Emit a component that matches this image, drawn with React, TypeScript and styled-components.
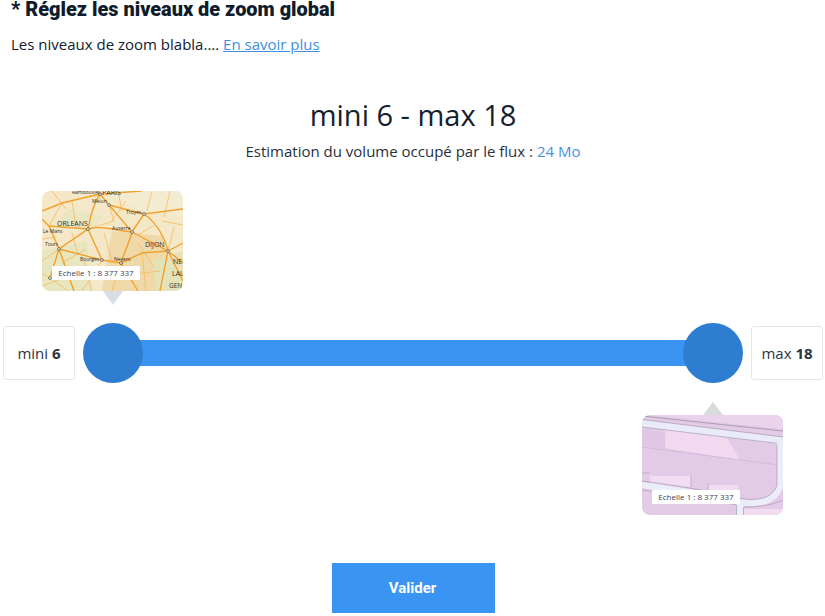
import * as React from "react";
import styled, { createGlobalStyle } from "styled-components";

const GlobalStyle = createGlobalStyle`
  html, body {
    margin: 0;
    padding: 0;
    background: #fff;
  }
  body {
    font-family: "Open Sans", "Noto Sans", sans-serif;
    color: #14202e;
  }
`;

const Page = styled.div`
  width: 825px;
  height: 616px;
  overflow: hidden;
`;

const Header = styled.div`
  padding-left: 11px;
`;

const Title = styled.h2`
  margin: 0;
  font-family: Roboto, sans-serif;
  font-size: 19.9px;
  font-weight: 900;
  line-height: 20px;
  color: #0f1c2b;
`;

const Intro = styled.p`
  margin: 14px 0 0;
  font-size: 15px;
  line-height: 20px;
`;

const Link = styled.a`
  color: #3d8fde;
  text-decoration: underline;
`;

const Summary = styled.div`
  margin-top: 42px;
  padding-left: 1px;
  text-align: center;
`;

const Range = styled.div`
  font-size: 29px;
  line-height: 38px;
  color: #14202e;
`;

const Estimate = styled.div`
  margin-top: 7px;
  font-size: 15px;
  line-height: 20px;
  color: #27313d;
`;

const Accent = styled.span`
  color: #4a90e2;
`;

const PreviewRow = styled.div<{ $left: number; $top: number }>`
  display: flex;
  margin-top: ${p => p.$top}px;
  padding-left: ${p => p.$left}px;
`;

const Preview = styled.div<{ $flip?: boolean }>`
  display: flex;
  flex-direction: ${p => (p.$flip ? "column-reverse" : "column")};
  align-items: center;
  width: 141px;
`;

const Arrow = styled.div<{ $flip?: boolean }>`
  width: 0;
  height: 0;
  border-left: 10px solid transparent;
  border-right: 10px solid transparent;
  ${p =>
    p.$flip
      ? "border-bottom: 13px solid #dadbdf;"
      : "border-top: 14px solid #d9dde7;"}
`;

const MapCard = styled.div`
  position: relative;
  width: 141px;
  height: 100px;
  border-radius: 8px;
  overflow: hidden;
  svg {
    display: block;
  }
`;

const Scale = styled.div`
  position: absolute;
  left: 10px;
  top: 75px;
  width: 88px;
  height: 14px;
  background: #fff;
  font-size: 8px;
  line-height: 14px;
  text-align: center;
  color: #3a4450;
`;

const SliderRow = styled.div`
  display: flex;
  align-items: center;
  height: 60px;
  margin-top: 18px;
  padding-left: 3px;
`;

const Bound = styled.div`
  box-sizing: border-box;
  flex: none;
  width: 72px;
  height: 54px;
  border: 1px solid #e4e6ea;
  border-radius: 3px;
  font-size: 15px;
  line-height: 52px;
  text-align: center;
  color: #2c3440;
  b {
    font-weight: 700;
  }
`;

const Rail = styled.div`
  display: flex;
  align-items: center;
  flex: none;
  width: 660px;
  margin: 0 8px;
`;

const Thumb = styled.div`
  position: relative;
  flex: none;
  width: 60px;
  height: 60px;
  border-radius: 50%;
  background: #2f7dd0;
`;

const Track = styled.div`
  flex: 1;
  height: 26px;
  margin: 0 -30px;
  background: #3a94f2;
`;

const Footer = styled.div`
  display: flex;
  justify-content: center;
  margin-top: 48px;
  padding-left: 2px;
`;

const Submit = styled.button`
  width: 163px;
  height: 50px;
  border: 0;
  padding: 0 2px 0 0;
  background: #3a94f2;
  color: #fff;
  font-family: Roboto, sans-serif;
  font-size: 15px;
  font-weight: 700;
`;

const mainRoads = [
  "M58 3 L67 14 L90 41 L126 60 L141 72",
  "M58 3 C50 15 48 28 46 38 L17 58 L8 87",
  "M46 38 L60 69 L79 72 L96 100",
  "M46 38 C60 34 76 40 90 41 C86 55 82 62 79 72",
  "M67 14 L102 23 L141 18",
  "M102 23 L90 41",
  "M102 23 C115 32 122 45 126 60 L118 100",
  "M7 35 L46 38 M7 35 L17 58 M0 28 L7 35",
  "M17 58 L60 69 M17 58 L32 100",
  "M58 3 L20 12 L0 20 M58 3 L100 0",
  "M126 60 L141 52 M126 60 L141 90 M126 60 L100 62 L79 72",
];

const minorRoads = [
  "M60 69 L40 100 M79 72 L70 100 M0 70 L17 58 M0 95 L30 84",
  "M67 14 L72 30 L46 38 M20 12 L7 35 M30 10 L34 36 M30 42 L36 64",
  "M110 0 L105 20 M120 30 L141 34 M96 44 L112 34 M100 62 L104 100",
  "M62 42 L70 70 M70 30 L84 10 M10 0 L24 18 M0 48 L14 46",
  "M42 70 L50 100 M84 84 L118 80 M96 52 L112 76 M128 0 L122 26",
  "M20 72 L44 58 M76 0 L80 20 M0 82 L8 87 L26 100 M132 36 L126 60",
];

const FranceMap = () => (
  <svg width="141" height="100" viewBox="0 0 141 100" fontFamily="Open Sans, sans-serif">
    <rect width="141" height="100" fill="#f5e8c8" />
    <path d="M70 40 L120 45 L135 100 L60 100 Z" fill="#f0d9a8" />
    <path d="M0 60 L45 50 L50 100 L0 100 Z" fill="#e8e6bf" />
    <path d="M60 0 L141 0 L141 25 L100 20 Z" fill="#f3ecd2" />
    <path d="M25 18 L60 25 L50 40 L15 35 Z" fill="#ebe6c2" />
    <path d="M110 70 L141 60 L141 100 L115 100 Z" fill="#e4e2b8" />
    {minorRoads.map(d => (
      <path key={d} d={d} fill="none" stroke="#f4bb5e" strokeWidth="0.8" />
    ))}
    {mainRoads.map(d => (
      <path key={d} d={d} fill="none" stroke="#f3a02c" strokeWidth="1.4" />
    ))}
    {[[58, 3], [67, 14], [102, 23], [90, 41], [126, 60], [46, 38], [17, 58], [60, 69], [79, 72], [8, 87]].map(([cx, cy]) => (
      <circle key={`${cx}-${cy}`} cx={cx} cy={cy} r="1.4" fill="#fff" stroke="#222" strokeWidth="0.6" />
    ))}
    <g fill="#2b2b2b">
      <text x="60" y="4" fontSize="7">PARIS</text>
      <text x="30" y="3" fontSize="5">Rambouillet</text>
      <text x="50" y="12" fontSize="5">Melun</text>
      <text x="84" y="23" fontSize="5">Troyes</text>
      <text x="15" y="35" fontSize="7">ORLEANS</text>
      <text x="1" y="42" fontSize="5">Le Mans</text>
      <text x="70" y="39" fontSize="5">Auxerre</text>
      <text x="103" y="56" fontSize="7">DIJON</text>
      <text x="3" y="55" fontSize="5">Tours</text>
      <text x="38" y="70" fontSize="5">Bourges</text>
      <text x="72" y="70" fontSize="5">Nevers</text>
      <text x="131" y="73" fontSize="7">NE</text>
      <text x="130" y="85" fontSize="7">LAU</text>
      <text x="127" y="97" fontSize="6.5">GEN</text>
    </g>
  </svg>
);

const PlanMap = () => (
  <svg width="141" height="100" viewBox="0 0 141 100">
    <rect width="141" height="100" fill="#e3cbe8" />
    <path d="M0 0 H141 V14 L0 -1 Z" fill="#ecd3ec" />
    <path d="M0 1 L141 16" stroke="#8f8a98" strokeWidth="0.7" fill="none" />
    <path d="M23 12 L85 23 L98 45 L23 33 Z" fill="#f2d9f0" />
    <path d="M-2 8 L143 26" stroke="#e9ecf8" strokeWidth="7" fill="none" />
    <path d="M0 4.5 L141 22 M0 12 L141 29" stroke="#9a93a3" strokeWidth="0.6" fill="none" />
    <path d="M0 14 L23 18 V33 L0 30 Z" fill="#dfc6e4" />
    <path d="M0 32 L136 50" stroke="#c9afd0" strokeWidth="0.6" fill="none" />
    <path d="M8 61 H49 V72 L8 68 Z M66 70 H96 V82 L66 77 Z" fill="#f2dcf2" />
    <path d="M0 58 H8 M49 60 V72 M66 68 V78" stroke="#a99bb0" strokeWidth="0.6" fill="none" />
    <path d="M-2 70 C30 74 70 80 96 87 C115 90 132 88 138 72 L138 28" stroke="#eaeef9" strokeWidth="6" fill="none" />
    <path d="M0 66 C30 70 70 76 96 83 C112 86 130 85 135 70 L135 30" stroke="#9d96a6" strokeWidth="0.6" fill="none" />
    <path d="M0 75 C30 79 70 85 95 90 M141 85 C130 90 118 92 102 92" stroke="#9d96a6" strokeWidth="0.6" fill="none" />
    <path d="M98 87 L98 100" stroke="#eaeef9" strokeWidth="7" fill="none" />
    <path d="M94.5 90 V100 M101.5 92 V100" stroke="#9d96a6" strokeWidth="0.6" fill="none" />
    <path d="M102 94 H141 V100 H102 Z" fill="#f2dcf2" />
  </svg>
);

const SCALE_LABEL = "Echelle 1 : 8 377 337";

const App = () => (
  <Page>
    <GlobalStyle />
    <Header>
      <Title>* Réglez les niveaux de zoom global</Title>
      <Intro>
        Les niveaux de zoom blabla.... <Link href="#">En savoir plus</Link>
      </Intro>
    </Header>
    <Summary>
      <Range>mini 6 - max 18</Range>
      <Estimate>
        Estimation du volume occupé par le flux : <Accent>24 Mo</Accent>
      </Estimate>
    </Summary>
    <PreviewRow $left={42} $top={30}>
      <Preview>
        <MapCard>
          <FranceMap />
          <Scale>{SCALE_LABEL}</Scale>
        </MapCard>
        <Arrow />
      </Preview>
    </PreviewRow>
    <SliderRow>
      <Bound>
        mini <b>6</b>
      </Bound>
      <Rail>
        <Thumb />
        <Track />
        <Thumb />
      </Rail>
      <Bound>
        max <b>18</b>
      </Bound>
    </SliderRow>
    <PreviewRow $left={642} $top={19}>
      <Preview $flip>
        <MapCard>
          <PlanMap />
          <Scale>{SCALE_LABEL}</Scale>
        </MapCard>
        <Arrow $flip />
      </Preview>
    </PreviewRow>
    <Footer>
      <Submit>Valider</Submit>
    </Footer>
  </Page>
);

export default App;
